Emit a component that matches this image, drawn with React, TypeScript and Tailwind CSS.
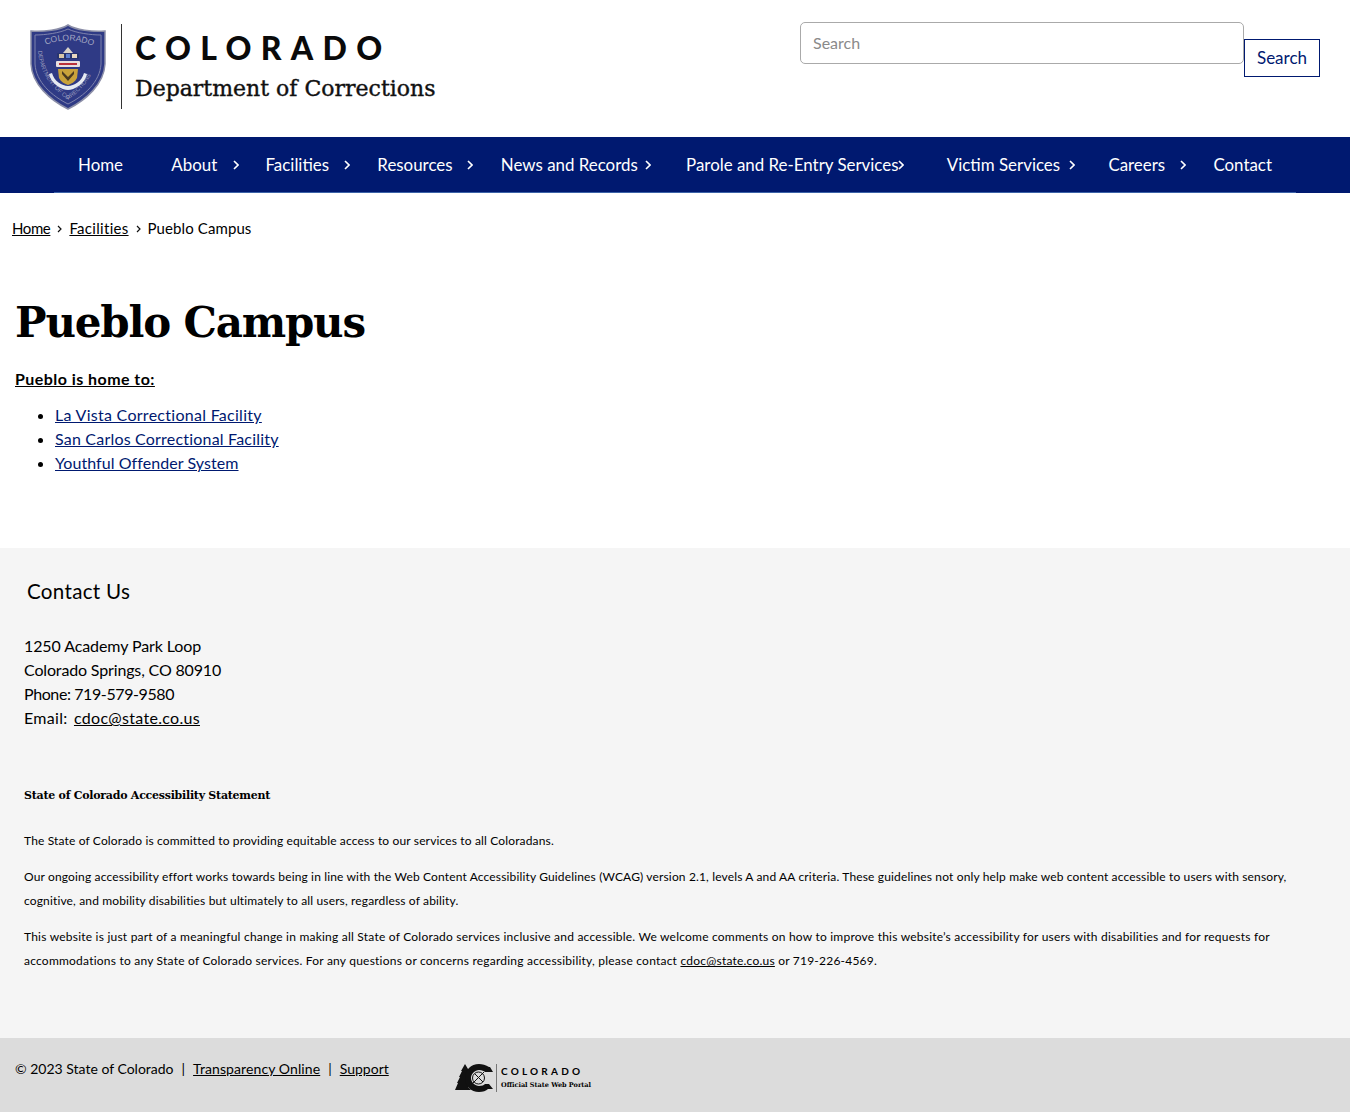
const nav: { t: string; c?: string }[] = [
  { t: "Home" },
  { t: "About", c: "left-[86px]" },
  { t: "Facilities", c: "left-[102px]" },
  { t: "Resources", c: "left-[114px]" },
  { t: "News and Records", c: "left-[168px]" },
  { t: "Parole and Re-Entry Services", c: "left-[236px]" },
  { t: "Victim Services", c: "left-[146px]" },
  { t: "Careers", c: "left-[96px]" },
  { t: "Contact" },
];

function Chev({ c }: { c: string }) {
  return (
    <svg width="6" height="10" viewBox="0 0 6 10" className={`absolute top-[7px] ${c}`}>
      <path d="M1 1 L5 5 L1 9" fill="none" stroke="#fff" strokeWidth="1.6" />
    </svg>
  );
}

function Crumb() {
  return (
    <svg width="5" height="8" viewBox="0 0 5 8" className="mx-[7px] mt-[2px]">
      <path d="M1 1 L4 4 L1 7" fill="none" stroke="#111" strokeWidth="1.2" />
    </svg>
  );
}

function Shield() {
  return (
    <svg width="76" height="86" viewBox="0 0 76 86" className="shrink-0">
      <path d="M38 1 C30 6 14 8 1 7 L1 40 C2 60 20 76 38 85 C56 76 74 60 75 40 L75 7 C62 8 46 6 38 1Z" fill="#2f3a85" stroke="#8c8fa8" strokeWidth="1.5" />
      <path d="M38 5 C30 9 15 11 5 11 L5 40 C6 58 22 72 38 80 C54 72 70 58 71 40 L71 11 C61 11 46 9 38 5Z" fill="none" stroke="#7f83ad" strokeWidth="1" />
      <path id="arc" d="M11 23 Q38 10 65 23" fill="none" />
      <text fontSize="8.5" fill="#a5a8c4" fontFamily="Liberation Sans, sans-serif">
        <textPath href="#arc" startOffset="5">COLORADO</textPath>
      </text>
      <path id="arcb" d="M8 25 C9 50 24 66 38 76 C52 66 67 50 68 25" fill="none" />
      <text fontSize="5.8" fill="#9a9dbd" fontFamily="Liberation Sans, sans-serif">
        <textPath href="#arcb" startOffset="2">DEPARTMENT OF CORRECTIONS</textPath>
      </text>
      <path d="M38 23 L33 29 L43 29Z" fill="#d8d2c8" />
      <rect x="27" y="29" width="22" height="6" rx="1" fill="#27346f" />
      <rect x="29" y="30" width="5" height="4" fill="#d7c6a8" />
      <rect x="36" y="30" width="4" height="4" fill="#5c7ed0" />
      <rect x="42" y="30" width="5" height="4" fill="#e8d8c0" />
      <rect x="26" y="37" width="24" height="6" rx="1" fill="#e9dfe0" />
      <rect x="29" y="39" width="18" height="2" fill="#b9303d" />
      <path d="M28 45 L48 45 L47 54 C45 58 41 60 38 61 C35 60 31 58 29 54Z" fill="#c9a23a" />
      <path d="M32 47 L38 53 L44 47 L44 50 L38 57 L32 50Z" fill="#4a3a20" />
      <path d="M19 50 C21 60 32 66 38 66 C44 66 55 60 57 50 L54 49 C52 57 44 62 38 62 C32 62 24 57 22 49Z" fill="#e6eaf2" />
    </svg>
  );
}

function StateLogo() {
  return (
    <svg width="38" height="30" viewBox="0 0 38 30" className="shrink-0">
      <path d="M0 27 L3 20 L2 20 L5 14 L4 14 L7 8 L6 8 L10 1 L13 6 L13 24 L16 27Z" fill="#111" />
      <path d="M34 4 C31 2 27 1 24 1 C16 1 10 7 10 15 C10 23 16 29 24 29 C28 29 31 28 33 26 L38 26 L34 21 L30 21 C29 22 27 23 24 23 C20 23 16 19 16 15 C16 11 20 7 24 7 C27 7 29 8 30 9 L38 9 L35 4Z" fill="#111" />
      <circle cx="23.5" cy="15" r="6" fill="#dcdcdc" stroke="#111" strokeWidth="1" />
      <path d="M18 20 L29 9 M20 11 L28 19" stroke="#111" strokeWidth="1" />
    </svg>
  );
}

export default function App() {
  return (
    <div className="min-h-[1113px] bg-white text-[16px] leading-6 text-black [font-family:Lato,'Liberation_Sans',sans-serif]">
      <header className="flex h-[137px] items-start justify-between pl-[30px] pr-[30px]">
        <div className="flex pt-[24px]">
          <Shield />
          <div className="ml-[15px] h-[85px] w-px bg-[#333]" />
          <div className="ml-[13px] pt-[5px]">
            <div className="text-[32px] font-black leading-[38px] tracking-[9.3px] text-[#0a0a0a]">COLORADO</div>
            <div className="mt-[7px] text-[22px] leading-[30px] text-[#111] [-webkit-text-stroke:0.4px_#111] [font-family:'DejaVu_Serif',serif]">Department of Corrections</div>
          </div>
        </div>
        <form className="flex items-start pt-[22px]">
          <input placeholder="Search" className="h-[42px] w-[444px] rounded-[5px] border border-[#aaa] px-3 pb-[2px] text-[16px] placeholder:text-[#8a8a8a]" />
          <button type="button" className="mt-[17px] h-[38px] w-[76px] border border-[#001970] text-[17px] text-[#001970]">Search</button>
        </form>
      </header>

      <nav className="h-[56px] bg-[#001970] pl-[54px] pr-[54px]">
        <ul className="flex h-[56px] items-center justify-between border-b border-[#3c63a8] text-[16.9px] text-white">
          {nav.map((n) => (
            <li key={n.t} className="relative whitespace-nowrap px-6">
              {n.t}
              {n.c && <Chev c={n.c} />}
            </li>
          ))}
        </ul>
      </nav>

      <div className="flex h-[70px] items-center pl-3 text-[15px] tracking-[0.1px]">
        <a className="tracking-[-0.4px] underline">Home</a>
        <Crumb />
        <a className="tracking-[0.3px] underline">Facilities</a>
        <Crumb />
        <span>Pueblo Campus</span>
      </div>

      <main className="h-[285px] pl-[15px]">
        <h1 className="pt-[32px] text-[42px] font-bold leading-[56px] tracking-[-1.2px] [font-family:'DejaVu_Serif',serif]">Pueblo Campus</h1>
        <p className="mt-[16px] font-bold tracking-[0.45px] underline">Pueblo is home to:</p>
        <ul className="mt-3 list-disc pl-10 text-[#001970] marker:text-black">
          <li className="tracking-[0.28px]"><a className="underline">La Vista Correctional Facility</a></li>
          <li className="tracking-[0.2px]"><a className="underline">San Carlos Correctional Facility</a></li>
          <li className="tracking-[0.07px]"><a className="underline">Youthful Offender System</a></li>
        </ul>
      </main>

      <section className="h-[490px] bg-[#f5f5f5] px-6 pt-[31px]">
        <h2 className="pl-[3px] text-[20.6px] leading-6 tracking-[0.3px]">Contact Us</h2>
        <div className="mt-[31px]">
          <div className="tracking-[-0.1px]">1250 Academy Park Loop</div>
          <div className="tracking-[-0.15px]">Colorado Springs, CO 80910</div>
          <div className="tracking-[-0.4px]">Phone: 719-579-9580</div>
          <div className="tracking-[0.3px]">Email: <a className="ml-[2px] underline">cdoc@state.co.us</a></div>
        </div>
        <div className="mt-[54px] text-[12px] leading-6 tracking-[0.15px]">
          <p className="text-[11px] font-bold tracking-[-0.25px] [font-family:'DejaVu_Serif',serif]">State of Colorado Accessibility Statement</p>
          <p className="mt-[21px]">The State of Colorado is committed to providing equitable access to our services to all Coloradans.</p>
          <p className="mt-3">Our ongoing accessibility effort works towards being in line with the Web Content Accessibility Guidelines (WCAG) version 2.1, levels A and AA criteria. These guidelines not only help make web content accessible to users with sensory, cognitive, and mobility disabilities but ultimately to all users, regardless of ability.</p>
          <p className="mt-3 tracking-[0.22px]">This website is just part of a meaningful change in making all State of Colorado services inclusive and accessible. We welcome comments on how to improve this website’s accessibility for users with disabilities and for requests for accommodations to any State of Colorado services. For any questions or concerns regarding accessibility, please contact <a className="underline">cdoc@state.co.us</a> or 719-226-4569.</p>
        </div>
      </section>

      <footer className="flex h-[74px] items-start bg-[#dcdcdc] pl-[15px] text-[14px]">
        <div className="mt-[19px] w-[440px] whitespace-nowrap">
          © 2023 State of Colorado<span className="mx-[8px]">|</span><a className="tracking-[0.1px] underline">Transparency Online</a><span className="mx-[8px]">|</span><a className="underline">Support</a>
        </div>
        <div className="mt-[25px] flex items-center">
          <StateLogo />
          <div className="ml-[3px] h-[28px] w-px bg-[#777]" />
          <div className="ml-[4px]">
            <div className="text-[10px] font-bold leading-[13px] tracking-[3.2px]">COLORADO</div>
            <div className="mt-px text-[6.5px] font-bold leading-[12px] [font-family:'DejaVu_Serif',serif]">Official State Web Portal</div>
          </div>
        </div>
      </footer>
    </div>
  );
}
